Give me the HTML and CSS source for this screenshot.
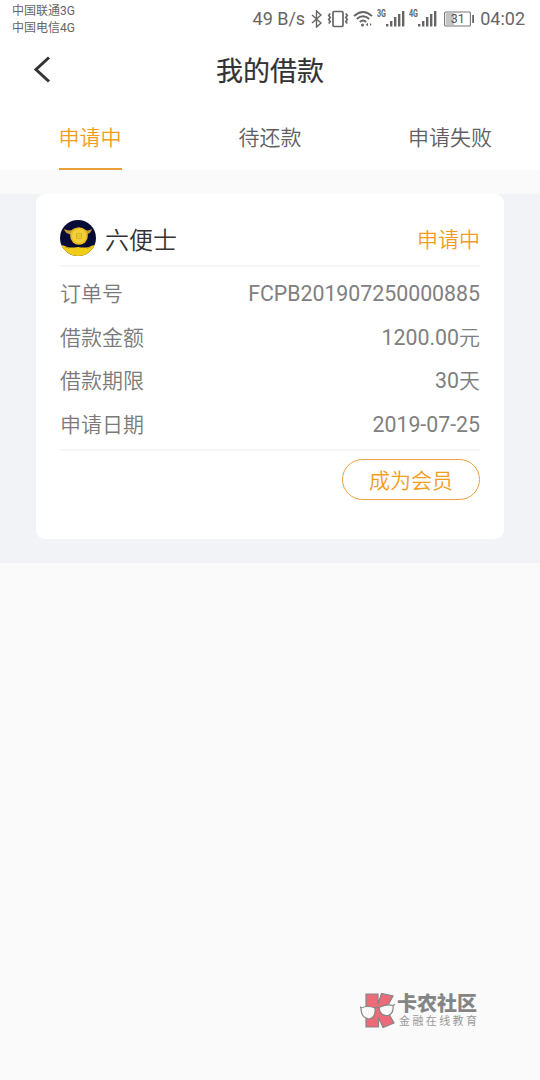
FILE: index.html
```
<!DOCTYPE html>
<html lang="zh-CN">
<head>
    <meta charset="UTF-8">
    <meta name="viewport" content="width=device-width, initial-scale=1.0">
    <title>我的借款</title>
    <link rel="stylesheet" href="styles.css">
</head>
<body>
    <div class="status-bar">
        <div class="carriers">
            <div>中国联通3G</div>
            <div>中国电信4G</div>
        </div>
        <div class="status-right">
            <span class="speed">49 B/s</span>
            <svg class="bluetooth" width="12" height="18" viewBox="0 0 12 18" fill="none" stroke="#666" stroke-width="1.4">
                <path d="M1 5l9 8-4.5 4V1L10 5l-9 8"/>
            </svg>
            <svg class="vibrate" width="22" height="18" viewBox="0 0 22 18" fill="none" stroke="#666" stroke-width="1.7">
                <rect x="6" y="1.5" width="10" height="15" rx="1.2"/>
                <path d="M3.200 3.500L1.700 5.500l1.500 2-1.500 2 1.500 2-1.500 2M18.800 3.500l1.500 2-1.500 2 1.500 2-1.500 2 1.500 2"/>
            </svg>
            <svg class="wifi" width="20" height="18" viewBox="0 0 20 18" fill="none" stroke="#666" stroke-width="1.8">
                <path d="M1 6Q10-2 19 6M3.800 9Q10 3.500 16.200 9M6.700 12Q10 9 13.300 12"/>
                <circle cx="9.5" cy="15" r="1.5" fill="#666" stroke="none"/>
                <path d="M15 12.800v3.400l-2.200-1.700zM17 13l1.500 1.500L17 16" fill="#666" stroke="none"/>
            </svg>
            <svg class="signal" width="28" height="20" viewBox="0 0 28 20" fill="#666">
                <text x="0" y="7.5" class="net" textLength="9" lengthAdjust="spacingAndGlyphs">3G</text>
                <path d="M9 15h2.400v2.500H9zM13 12h2.400v5.500H13zM17 8h2.400v9.500H17zM21 5h2.400v12.500H21zM25 2h2.400v15.500H25z"/>
            </svg>
            <svg class="signal" width="28" height="20" viewBox="0 0 28 20" fill="#666">
                <text x="0" y="7.5" class="net" textLength="9" lengthAdjust="spacingAndGlyphs">4G</text>
                <path d="M9 15h2.400v2.500H9zM13 12h2.400v5.500H13zM17 8h2.400v9.500H17zM21 5h2.400v12.500H21zM25 2h2.400v15.500H25z"/>
            </svg>
            <svg class="battery" width="31" height="16" viewBox="0 0 31 16">
                <rect x="2" y="2" width="8" height="12" fill="#c4c4c4"/>
                <rect x=".6" y="1" width="25.8" height="14" rx="1" fill="none" stroke="#777" stroke-width="1.1"/>
                <rect x="28.2" y="4" width="1.8" height="8" fill="#666"/>
                <text x="13.7" y="12.3" class="level">31</text>
            </svg>
            <span class="time">04:02</span>
        </div>
    </div>

    <div class="header">
        <svg class="back" width="18" height="28" viewBox="0 0 18 28" fill="none" stroke="#333" stroke-width="3">
            <path d="M16 1.500L3 13.500l13 12"/>
        </svg>
        <h1 class="title">我的借款</h1>
    </div>

    <div class="tabs">
        <div class="tab"><span class="tab-text active">申请中</span></div>
        <div class="tab"><span class="tab-text">待还款</span></div>
        <div class="tab"><span class="tab-text">申请失败</span></div>
    </div>

    <div class="list">
        <div class="card">
            <div class="card-head">
                <svg class="logo" width="36" height="36" viewBox="0 0 36 36">
                    <defs>
                        <clipPath id="round"><circle cx="18" cy="18" r="18"/></clipPath>
                    </defs>
                    <g clip-path="url(#round)">
                        <rect width="36" height="36" fill="#080b35"/>
                        <path d="M0 25q4 0 7 2 4 1 11 0 7 1 11 0 3-2 7-2v11H0z" fill="#f1cc17"/>
                        <path d="M4 9q6 3 10-.5h9q4 3.500 9 .5-1 4-5 5.500H10Q5 13 4 9z" fill="#c79a35"/>
                        <path d="M5 27q3 0 4 2M31 27q-3 0-4 2" fill="none" stroke="#a98a22" stroke-width=".8"/>
                        <circle cx="19" cy="16" r="8.8" fill="#e9bd20"/>
                        <circle cx="19" cy="16" r="7" fill="#f2d03a"/>
                        <path d="M16.500 13.500h5v5h-5zM16.500 16h5" fill="none" stroke="#d5a91f" stroke-width=".8"/>
                    </g>
                </svg>
                <span class="name">六便士</span>
                <span class="state">申请中</span>
            </div>
            <div class="rows">
                <div class="row"><span>订单号</span><span class="value">FCPB201907250000885</span></div>
                <div class="row"><span>借款金额</span><span class="value">1200.00<span class="unit">元</span></span></div>
                <div class="row"><span>借款期限</span><span class="value">30<span class="unit">天</span></span></div>
                <div class="row"><span>申请日期</span><span class="value">2019-07-25</span></div>
            </div>
            <div class="card-foot">
                <button class="member-button">成为会员</button>
            </div>
        </div>
    </div>

    <div class="watermark">
        <svg width="36" height="36" viewBox="0 0 36 36" stroke="#858585" stroke-width="1.2">
            <path d="M6 1h12v10l3.500-10.500L33 3l-7 13 8 14-11 4.500-4.500-10V34H6z" fill="#ec6b78"/>
            <path d="M1 15q7-3 14 0 1 10-6 11-8-1-8-11zM19 14.500q7-4 14-2 1 8-5 10-8 1-9-8z" fill="#fafafa"/>
            <path d="M15 15.500q2-2 4-.5M1 15l-1-1.500M33 12.500l2-1" fill="none"/>
        </svg>
        <div class="watermark-text">
            <div class="brand">卡农社区</div>
            <div class="slogan">金融在线教育</div>
        </div>
    </div>
</body>
</html>
```
FILE: styles.css
```
* {
    box-sizing: border-box;
}

body {
    margin: 0;
    min-height: 100vh;
    background-color: #fafafa;
    font-family: Roboto, "Noto Sans CJK SC", sans-serif;
    font-size: 21px;
    font-weight: 350;
    color: #606060;
}

.status-bar {
    display: flex;
    justify-content: space-between;
    height: 38px;
    padding: 0 15px 0 12px;
    background-color: #fff;
    font-weight: 400;
    color: #666;
}

.carriers {
    padding-top: 3px;
    font-size: 12px;
    line-height: 16.5px;
}

.status-right {
    display: flex;
    align-items: center;
    height: 37px;
    font-size: 18px;
}

.speed {
    margin-right: 6px;
}

.bluetooth {
    margin-right: 4px;
}

.vibrate {
    margin-right: 4px;
}

.wifi {
    margin-right: 4px;
}

.signal {
    margin-right: 4px;
}

.net {
    font-size: 10px;
    font-weight: 700;
}

.battery {
    margin: 0 5px 0 3px;
}

.level {
    font-size: 12.5px;
    fill: #555;
    text-anchor: middle;
}

.header {
    display: flex;
    align-items: center;
    height: 66px;
    padding: 0 33px;
    background-color: #fff;
}

.back {
    margin-bottom: 2px;
}

.title {
    flex: 1;
    margin: 2px 18px 0 0;
    font-size: 27px;
    font-weight: 400;
    line-height: 40px;
    text-align: center;
    color: #333;
    -webkit-text-stroke: 0.2px #333;
}

.tabs {
    display: flex;
    height: 66px;
    background-color: #fff;
}

.tab {
    flex: 1;
    text-align: center;
}

.tab-text {
    display: inline-block;
    height: 66px;
    line-height: 68px;
}

.active {
    color: #f39c1b;
    border-bottom: 2px solid #e9a03b;
}

.list {
    margin-top: 24px;
    padding: 0 36px 24px;
    background-color: #f2f3f7;
}

.card {
    height: 345px;
    padding: 0 24px;
    border-radius: 9px;
    background-color: #fff;
}

.card-head {
    display: flex;
    align-items: center;
    height: 73px;
    padding-top: 17px;
    border-bottom: 2px solid #f5f5f5;
}

.name {
    flex: 1;
    margin-left: 9px;
    font-size: 24px;
    color: #333;
}

.state {
    color: #f39c1b;
}

.rows {
    padding: 6px 0 2px;
    border-bottom: 2px solid #f5f5f5;
    color: #7a7a7a;
}

.row {
    display: flex;
    justify-content: space-between;
    height: 43.5px;
    line-height: 43.5px;
}

.value {
    font-size: 21.3px;
    font-weight: 400;
    line-height: 41.5px;
    color: #808080;
}

.unit {
    font-size: 21px;
    font-weight: 350;
}

.card-foot {
    display: flex;
    justify-content: flex-end;
    padding-top: 8px;
}

.member-button {
    width: 138px;
    height: 41px;
    padding: 0 0 2px;
    border: 1.5px solid #eda03c;
    border-radius: 21px;
    background-color: #fff;
    font: inherit;
    color: #f39c1b;
}

/* sits over the page in the corner */
.watermark {
    position: absolute;
    right: 63px;
    bottom: 51px;
    display: flex;
    align-items: center;
    color: #858585;
}

.watermark-text {
    width: 81px;
}

.brand {
    padding-left: 1px;
    font-size: 20px;
    font-weight: 900;
    line-height: 22px;
}

.slogan {
    padding-left: 3px;
    font-size: 11px;
    font-weight: 400;
    line-height: 14px;
    letter-spacing: 2.4px;
    white-space: nowrap;
    color: #999;
}
```
